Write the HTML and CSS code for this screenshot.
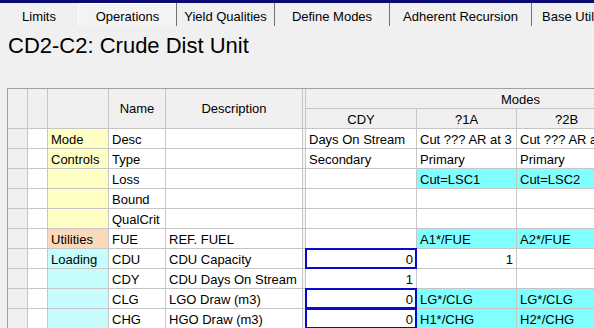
FILE: index.html
```html
<!DOCTYPE html>
<html lang="en">

<head>
    <meta charset="UTF-8">
    <title>CD2-C2: Crude Dist Unit</title>
    <link rel="stylesheet" href="styles.css">
</head>

<body>
    <div class="topbar"></div>
    <div class="tabs">
        <div class="tab t-limits">Limits</div>
        <div class="tab t-ops active">Operations</div>
        <div class="tab t-yield sep">Yield Qualities</div>
        <div class="tab t-modes sep">Define Modes</div>
        <div class="tab t-adh sep">Adherent Recursion</div>
        <div class="tab t-base sep">Base Util</div>
    </div>

    <h1 class="title">CD2-C2: Crude Dist Unit</h1>

    <div class="gridwrap">
        <div class="grid">
            <!-- header -->
            <div class="hd span2"></div>
            <div class="hd span2"></div>
            <div class="hd span2"></div>
            <div class="hd span2 center">Name</div>
            <div class="hd span2 center">Description</div>
            <div class="hd span2 dbl"></div>
            <div class="hd modes">Modes</div>
            <div class="hd center">CDY</div>
            <div class="hd center">?1A</div>
            <div class="hd center">?2B</div>
            <div class="hd"></div>

            <!-- Desc -->
            <div class="rh"></div><div class="c"></div>
            <div class="c cat-y">Mode</div>
            <div class="c">Desc</div>
            <div class="c"></div>
            <div class="dbl"></div>
            <div class="c">Days On Stream</div>
            <div class="c">Cut ??? AR at 3</div>
            <div class="c">Cut ??? AR a</div>
            <div class="c"></div>

            <!-- Type -->
            <div class="rh"></div><div class="c"></div>
            <div class="c cat-y">Controls</div>
            <div class="c">Type</div>
            <div class="c"></div>
            <div class="dbl"></div>
            <div class="c">Secondary</div>
            <div class="c">Primary</div>
            <div class="c">Primary</div>
            <div class="c"></div>

            <!-- Loss -->
            <div class="rh"></div><div class="c"></div>
            <div class="c cat-y"></div>
            <div class="c">Loss</div>
            <div class="c"></div>
            <div class="dbl"></div>
            <div class="c"></div>
            <div class="c aqua">Cut=LSC1</div>
            <div class="c aqua">Cut=LSC2</div>
            <div class="c"></div>

            <!-- Bound -->
            <div class="rh"></div><div class="c"></div>
            <div class="c cat-y"></div>
            <div class="c">Bound</div>
            <div class="c"></div>
            <div class="dbl"></div>
            <div class="c"></div>
            <div class="c"></div>
            <div class="c"></div>
            <div class="c"></div>

            <!-- QualCrit -->
            <div class="rh"></div><div class="c"></div>
            <div class="c cat-y"></div>
            <div class="c">QualCrit</div>
            <div class="c"></div>
            <div class="dbl"></div>
            <div class="c"></div>
            <div class="c"></div>
            <div class="c"></div>
            <div class="c"></div>

            <!-- FUE -->
            <div class="rh"></div><div class="c"></div>
            <div class="c cat-o">Utilities</div>
            <div class="c">FUE</div>
            <div class="c">REF. FUEL</div>
            <div class="dbl"></div>
            <div class="c"></div>
            <div class="c aqua">A1*/FUE</div>
            <div class="c aqua">A2*/FUE</div>
            <div class="c"></div>

            <!-- CDU -->
            <div class="rh"></div><div class="c"></div>
            <div class="c cat-c">Loading</div>
            <div class="c">CDU</div>
            <div class="c">CDU Capacity</div>
            <div class="dbl"></div>
            <div class="c num sel">0</div>
            <div class="c num">1</div>
            <div class="c"></div>
            <div class="c"></div>

            <!-- CDY -->
            <div class="rh"></div><div class="c"></div>
            <div class="c cat-c"></div>
            <div class="c">CDY</div>
            <div class="c">CDU Days On Stream</div>
            <div class="dbl"></div>
            <div class="c num">1</div>
            <div class="c"></div>
            <div class="c"></div>
            <div class="c"></div>

            <!-- CLG -->
            <div class="rh"></div><div class="c"></div>
            <div class="c cat-c"></div>
            <div class="c">CLG</div>
            <div class="c">LGO Draw (m3)</div>
            <div class="dbl"></div>
            <div class="c num sel">0</div>
            <div class="c aqua">LG*/CLG</div>
            <div class="c aqua">LG*/CLG</div>
            <div class="c"></div>

            <!-- CHG -->
            <div class="rh"></div><div class="c"></div>
            <div class="c cat-c"></div>
            <div class="c">CHG</div>
            <div class="c">HGO Draw (m3)</div>
            <div class="dbl"></div>
            <div class="c num sel">0</div>
            <div class="c aqua">H1*/CHG</div>
            <div class="c aqua">H2*/CHG</div>
            <div class="c"></div>
        </div>
    </div>
</body>

</html>
```

FILE: styles.css
```css
body {
    margin: 0;
    width: 594px;
    height: 328px;
    overflow: hidden;
    background-color: #f0f0f0;
    font-family: "Liberation Sans", Arial, sans-serif;
    color: #000;
}

.topbar {
    height: 3px;
    background-color: #0a0a72;
}

.tabs {
    display: flex;
    height: 23px;
    font-size: 13px;
    white-space: nowrap;
}

.tab {
    box-sizing: border-box;
    padding-top: 4px;
    height: 23px;
    line-height: 19px;
    text-align: center;
    flex: none;
    overflow: hidden;
}

.tab.sep {
    border-left: 1px solid #707070;
}

.tab.active {
    padding-top: 3px;
    border-top: 1px solid #ffffff;
    border-left: 1px solid #ffffff;
    background-color: #f3f3f3;
}

.t-limits { width: 78px; }
.t-ops { width: 98px; }
.t-yield { width: 98px; }
.t-modes { width: 115px; }
.t-adh { width: 142px; }
.t-base { width: 63px; text-align: left; padding-left: 10px; }

.title {
    margin: 7px 0 0 0;
    padding-left: 8px;
    font-size: 22px;
    line-height: 26px;
    font-weight: normal;
}

.gridwrap {
    margin-top: 29px;
    margin-left: 7px;
    overflow: hidden;
}

.grid {
    display: grid;
    width: max-content;
    grid-template-columns: 19px 19px 60px 56px 136px 2px 110px 99px 99px 118px;
    grid-auto-rows: 19px;
    gap: 1px;
    background-color: #c6c6c6;
    border-top: 1px solid #a0a0a0;
    border-left: 1px solid #a0a0a0;
    font-size: 13px;
}

.grid > div {
    box-sizing: border-box;
    padding-top: 1px;
    line-height: 20px;
    white-space: nowrap;
    overflow: hidden;
}

.hd {
    background-color: #f0f0f0;
}

.span2 {
    grid-row: span 2;
    display: flex;
    align-items: center;
    justify-content: center;
}

.center {
    text-align: center;
}

.modes {
    grid-column: span 4;
    text-align: center;
}

.dbl {
    background-color: #f7f7f7;
}

.hd.dbl {
    background-color: #f0f0f0;
}

.rh {
    background-color: #f0f0f0;
}

.c {
    background-color: #ffffff;
    padding-left: 3px;
    padding-right: 3px;
}

.num {
    text-align: right;
}

.cat-y { background-color: #ffffc4; }
.cat-o { background-color: #fbd9bb; }
.cat-c { background-color: #c6fcfc; }
.aqua { background-color: #80ffff; }

.grid > .sel {
    overflow: visible;
    outline: 1px solid #0a0ac8;
    box-shadow: inset 0 0 0 1px #0a0ac8;
}
```
